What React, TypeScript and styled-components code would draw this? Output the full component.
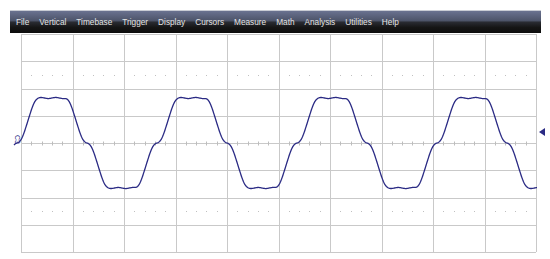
import React from "react";
import styled, { createGlobalStyle } from "styled-components";

const GlobalStyle = createGlobalStyle`
  html, body {
    margin: 0;
    padding: 0;
    background: #ffffff;
  }
`;

// graticule geometry
const COLS = 10;
const ROWS = 8;
const DIV_W = 51.5;
const DIV_H = 27.25;
const W = COLS * DIV_W;
const H = ROWS * DIV_H;
const TRACE = "#2a2a84";

const menuItems = [
  "File",
  "Vertical",
  "Timebase",
  "Trigger",
  "Display",
  "Cursors",
  "Measure",
  "Math",
  "Analysis",
  "Utilities",
  "Help",
];

const Page = styled.div`
  padding: 10px 9px 0 10px;
  font-family: "Liberation Sans", Arial, sans-serif;
`;

const MenuBar = styled.div`
  width: 531px;
  height: 23px;
  box-sizing: border-box;
  display: flex;
  align-items: center;
  gap: 10px;
  padding: 0 0 0 6px;
  border-top: 1px solid #c9ccd4;
  background: linear-gradient(
    to bottom,
    #6a7290 0%,
    #4c5368 45%,
    #2a2c33 50%,
    #151515 75%,
    #0c0c0c 100%
  );
`;

const MenuItem = styled.span`
  color: #e4e4e4;
  font-size: 8.25px;
  white-space: nowrap;
`;

const ScopeRow = styled.div`
  display: flex;
  margin-top: 1px;
`;

const LabelCol = styled.div`
  width: 11px;
  height: ${H}px;
  display: flex;
  align-items: center;
  justify-content: center;
`;

const ChannelLabel = styled.span`
  color: ${TRACE};
  font-size: 7px;
  line-height: 7px;
  transform: rotate(90deg);
  margin-bottom: 7px;
  margin-left: 4px;
`;

const Screen = styled.svg`
  display: block;
  overflow: visible;
`;

const MarkerCol = styled.div`
  padding: 94px 0 0 2px;
`;

const LevelMarker = styled.div`
  width: 0;
  height: 0;
  border-top: 4px solid transparent;
  border-bottom: 4px solid transparent;
  border-right: 6px solid ${TRACE};
`;

// three-level trapezoid (top, short dwell at 0, bottom), then smoothed
const PERIOD = 140;
function rawLevel(p: number): number {
  const t = ((p % PERIOD) + PERIOD) % PERIOD;
  if (t < 8) return 0;
  if (t < 22) return (t - 8) / 14;
  if (t < 56) return 1;
  if (t < 70) return 1 - (t - 56) / 14;
  if (t < 78) return 0;
  if (t < 92) return -(t - 78) / 14;
  if (t < 126) return -1;
  return -1 + (t - 126) / 14;
}

function smoothLevel(p: number): number {
  const sigma = 2.6;
  let sum = 0;
  let wsum = 0;
  for (let k = -8; k <= 8; k += 0.5) {
    const w = Math.exp(-(k * k) / (2 * sigma * sigma));
    sum += w * rawLevel(p + k);
    wsum += w;
  }
  return sum / wsum;
}

function buildTrace(): string {
  // page x 14..537 maps to svg x -7..516; phase origin at page x 13
  const pts: string[] = [];
  for (let x = -7; x <= 516; x += 0.5) {
    const p = x + 21 - 13;
    let v = smoothLevel(p);
    const t = ((p % PERIOD) + PERIOD) % PERIOD;
    // faint ripple on the flats
    if ((t > 24 && t < 54) || (t > 94 && t < 124)) {
      v += 0.012 * Math.sin(((t % 70) - 24) * 0.42) * Math.sign(v);
    }
    const y = H / 2 - v * 45;
    pts.push(`${x.toFixed(1)},${y.toFixed(2)}`);
  }
  return "M" + pts.join(" L");
}

function Graticule() {
  const lines: React.ReactNode[] = [];
  for (let i = 0; i <= COLS; i++) {
    const x = Math.round(i * DIV_W) + 0.5;
    lines.push(<line key={`v${i}`} x1={x} y1={0} x2={x} y2={H} />);
  }
  for (let j = 0; j <= ROWS; j++) {
    const y = Math.round(j * DIV_H) + 0.5;
    lines.push(<line key={`h${j}`} x1={0} y1={y} x2={W} y2={y} />);
  }
  const dots: React.ReactNode[] = [];
  const ticks: React.ReactNode[] = [];
  const dotRows = [1.5 * DIV_H, 6.5 * DIV_H];
  const cy = Math.round(4 * DIV_H) + 0.5;
  for (let i = 0; i < COLS; i++) {
    for (let s = 1; s < 5; s++) {
      const x = Math.round(i * DIV_W + (s * DIV_W) / 5) + 0.5;
      dotRows.forEach((y, r) => {
        dots.push(
          <rect key={`d${i}-${s}-${r}`} x={x - 0.5} y={Math.round(y)} width={1} height={1} />
        );
      });
      ticks.push(<line key={`t${i}-${s}`} x1={x} y1={cy - 2} x2={x} y2={cy + 2} />);
    }
  }
  return (
    <>
      <g stroke="#c9c9c9" strokeWidth={1}>{lines}</g>
      <g fill="#c0c0c0">{dots}</g>
      <g stroke="#bdbdbd" strokeWidth={1}>{ticks}</g>
    </>
  );
}

export default function App() {
  const trace = buildTrace();
  return (
    <Page>
      <GlobalStyle />
      <MenuBar>
        {menuItems.map((m) => (
          <MenuItem key={m}>{m}</MenuItem>
        ))}
      </MenuBar>
      <ScopeRow>
        <LabelCol>
          <ChannelLabel>C3</ChannelLabel>
        </LabelCol>
        <Screen width={W + 1} height={H + 1} viewBox={`0 0 ${W + 1} ${H + 1}`}>
          <Graticule />
          <path d={trace} fill="none" stroke={TRACE} strokeWidth={1.3} strokeLinejoin="round" />
        </Screen>
        <MarkerCol>
          <LevelMarker />
        </MarkerCol>
      </ScopeRow>
    </Page>
  );
}
